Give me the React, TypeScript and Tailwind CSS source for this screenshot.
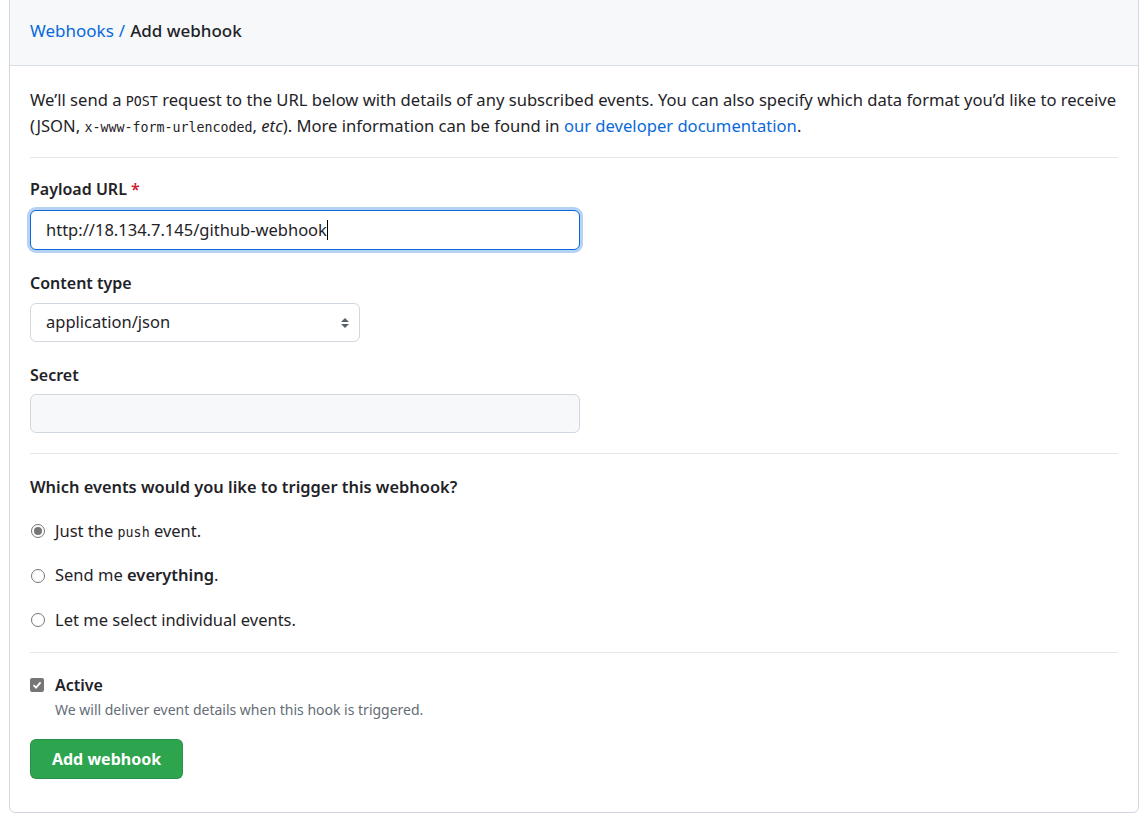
import React from "react";

const sans = "font-['Noto_Sans',sans-serif]";
const mono = "font-['DejaVu_Sans_Mono',monospace] leading-none";

function Radio({ checked, children }: { checked?: boolean; children: React.ReactNode }) {
  return (
    <label className="flex h-[24px] items-center gap-[10px] text-[16.5px] text-[#1f2328]">
      <span className="ml-px flex h-[14px] w-[14px] items-center justify-center rounded-full border border-[#767676] bg-white">
        {checked && <span className="h-[8px] w-[8px] rounded-full bg-[#767676]" />}
      </span>
      <span>{children}</span>
    </label>
  );
}

export default function App() {
  return (
    <div className={`${sans} min-h-[815px] bg-white pl-[9px] pr-[2px] text-[#1f2328]`}>
      <div className="-mt-px w-[1130px] rounded-b-md border border-[#d0d7de] bg-white">
        <div className="flex h-[66px] items-center border-b border-[#d8dee4] bg-[#f6f8fa] px-5 pb-[3px] text-[17px]">
          <a className="text-[#0969da]">Webhooks</a>
          <span className="mx-[5px] text-[#0969da]">/</span>
          <span className="font-medium">Add webhook</span>
        </div>

        <div className="px-5 pb-[33px]">
          <p className="border-b border-[#e5e8eb] pb-[18px] pt-[21px] text-[16.6px] leading-[26px]">
            We’ll send a <code className={`${mono} text-[13.3px]`}>POST</code> request to the URL below with
            details of any subscribed events. You can also specify which data format you’d like to receive
            (JSON, <code className={`${mono} text-[13.3px]`}>x-www-form-urlencoded</code>, <em>etc</em>). More
            information can be found in <a className="text-[#0969da]">our developer documentation</a>.
          </p>

          <div className="border-b border-[#e5e8eb] pb-5">
            <div className="mt-[19px] text-[16px] font-semibold leading-[24px]">
              Payload URL <span className="text-[#cf222e]">*</span>
            </div>
            <div className="mt-[9px] flex h-[40px] w-[550px] items-center rounded-md border border-[#0969da] bg-white px-[15px] text-[16.5px] shadow-[0_0_0_3px_rgba(9,105,218,0.3)]">
              <span>http://18.134.7.145/github-webhook</span>
              <span className="h-[20px] w-px bg-black" />
            </div>

            <div className="mt-[21px] text-[16px] font-semibold leading-[24px]">Content type</div>
            <div className="mt-2 flex h-[39px] w-[330px] items-center justify-between rounded-md border border-[#d0d7de] bg-white pl-[15px] pr-[9px] text-[16.5px]">
              <span>application/json</span>
              <svg width="10" height="14" viewBox="0 0 10 14">
                <path d="M5 2 L9 6 L1 6 Z" fill="#57606a" />
                <path d="M5 12 L9 8 L1 8 Z" fill="#57606a" />
              </svg>
            </div>

            <div className="mt-[21px] text-[16px] font-semibold leading-[24px]">Secret</div>
            <div className="mt-[7px] h-[39px] w-[550px] rounded-md border border-[#d0d7de] bg-[#f6f8fa]" />
          </div>

          <div className="border-b border-[#e5e8eb] pb-[20px]">
            <div className="mt-[21px] text-[16.4px] font-semibold leading-[24px]">
              Which events would you like to trigger this webhook?
            </div>
            <div className="mt-[20px] flex flex-col gap-[20.5px]">
              <Radio checked>
                Just the <code className={`${mono} text-[13.3px]`}>push</code> event.
              </Radio>
              <Radio>
                Send me <strong className="font-semibold">everything</strong>.
              </Radio>
              <Radio>Let me select individual events.</Radio>
            </div>
          </div>

          <div className="mt-[20px] flex items-start gap-[11px]">
            <span className="mt-[5px] flex h-[14px] w-[14px] items-center justify-center rounded-[2px] bg-[#767676]">
              <svg width="10" height="10" viewBox="0 0 10 10">
                <path d="M1.5 5.2 L4 7.6 L8.6 2.4" fill="none" stroke="white" strokeWidth="1.8" />
              </svg>
            </span>
            <div>
              <div className="text-[16px] font-semibold leading-[24px]">Active</div>
              <div className="mt-[3px] text-[14px] leading-[20px] text-[#656d76]">
                We will deliver event details when this hook is triggered.
              </div>
            </div>
          </div>

          <button className="mt-[19px] h-[40px] w-[153px] rounded-md border border-[rgba(31,35,40,0.15)] bg-[#2da44e] text-[16px] font-bold text-white">
            Add webhook
          </button>
        </div>
      </div>
    </div>
  );
}
